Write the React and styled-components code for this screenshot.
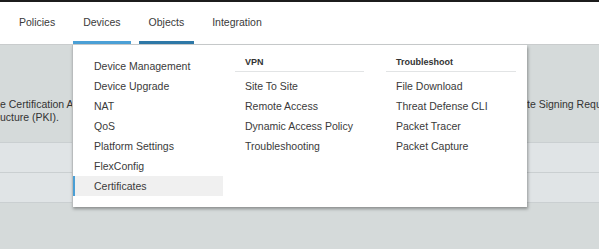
import React from "react";
import styled, { createGlobalStyle } from "styled-components";

const GlobalStyle = createGlobalStyle`
  body {
    margin: 0;
    width: 599px;
    height: 249px;
    overflow: hidden;
    background: #d5dada;
    font-family: "Liberation Sans", Helvetica, Arial, sans-serif;
    color: #333;
  }
`;

const TopStrip = styled.div`
  height: 2px;
  background: #1c1c1c;
`;

const NavBar = styled.nav`
  position: relative;
  display: flex;
  gap: 8px;
  height: 42px;
  padding-left: 9px;
  background: #fff;
  border-bottom: 1px solid #c9cccd;
`;

const Tab = styled.div`
  display: flex;
  align-items: center;
  height: 39px;
  padding: 0 10px;
  font-size: 10.5px;
  color: #3a3a3a;
  border-bottom: 3px solid ${(props) => props.line || "transparent"};
`;

const Dropdown = styled.div`
  position: absolute;
  top: 43px;
  left: 72px;
  width: 455px;
  height: 162px;
  box-sizing: border-box;
  display: flex;
  padding: 11px 11px 11px 0;
  background: #fff;
  border-left: 1px solid #b9bcbd;
  box-shadow: 1px 2px 3px rgba(0, 0, 0, 0.35);
  z-index: 2;
`;

const MainColumn = styled.div`
  width: 150px;
  flex-shrink: 0;
`;

const MenuItem = styled.div`
  height: 20px;
  display: flex;
  align-items: center;
  padding-left: ${(props) => (props.active ? "19px" : "21px")};
  font-size: 10.5px;
  color: #3a3a3a;
  background: ${(props) => (props.active ? "#f0f0f0" : "transparent")};
  border-left: ${(props) => (props.active ? "2px solid #4a9fd5" : "none")};
`;

const Group = styled.div`
  width: ${(props) => props.width}px;
  margin-left: ${(props) => props.offset}px;
  flex-shrink: 0;
`;

const GroupTitle = styled.div`
  padding: 0 0 2px 10px;
  margin-bottom: 4px;
  line-height: 13px;
  font-size: 9px;
  font-weight: bold;
  color: #333;
  border-bottom: 1px solid #e2e4e5;
`;

const GroupItem = styled(MenuItem)`
  padding-left: 10px;
`;

const Content = styled.main`
  display: flex;
  flex-direction: column;
`;

const Description = styled.section`
  height: 97px;
  box-sizing: border-box;
  display: grid;
  grid-template-columns: 527px 1fr;
  padding-top: 53px;
  font-size: 10.5px;
  line-height: 13px;
  color: #333;
  white-space: nowrap;
  overflow: hidden;
`;

const TextBlock = styled.p`
  margin: 0;
  overflow: hidden;
`;

const Row = styled.div`
  height: 29px;
  background: #e0e4e6;
  border-top: 1px solid #cacfd1;
  &:last-child {
    border-bottom: 1px solid #cacfd1;
  }
`;

const tabs = [
  { label: "Policies" },
  { label: "Devices", line: "#4ba0d6" },
  { label: "Objects", line: "#2e78a7" },
  { label: "Integration" },
];

const deviceItems = [
  "Device Management",
  "Device Upgrade",
  "NAT",
  "QoS",
  "Platform Settings",
  "FlexConfig",
  "Certificates",
];

const groups = [
  {
    title: "VPN",
    width: 129,
    offset: 12,
    items: ["Site To Site", "Remote Access", "Dynamic Access Policy", "Troubleshooting"],
  },
  {
    title: "Troubleshoot",
    width: 130,
    offset: 22,
    items: ["File Download", "Threat Defense CLI", "Packet Tracer", "Packet Capture"],
  },
];

export default function App() {
  return (
    <>
      <GlobalStyle />
      <TopStrip />
      <NavBar>
        {tabs.map((tab) => (
          <Tab key={tab.label} line={tab.line}>
            {tab.label}
          </Tab>
        ))}
        <Dropdown>
          <MainColumn>
            {deviceItems.map((item) => (
              <MenuItem key={item} active={item === "Certificates"}>
                {item}
              </MenuItem>
            ))}
          </MainColumn>
          {groups.map((group) => (
            <Group key={group.title} width={group.width} offset={group.offset}>
              <GroupTitle>{group.title}</GroupTitle>
              {group.items.map((item) => (
                <GroupItem key={item}>{item}</GroupItem>
              ))}
            </Group>
          ))}
        </Dropdown>
      </NavBar>
      <Content>
        <Description>
          <TextBlock>
            e Certification Authority (CA) and the Public Key
            <br />
            ucture (PKI).
          </TextBlock>
          <TextBlock>te Signing Request (CSR)</TextBlock>
        </Description>
        <Row />
        <Row />
      </Content>
    </>
  );
}
